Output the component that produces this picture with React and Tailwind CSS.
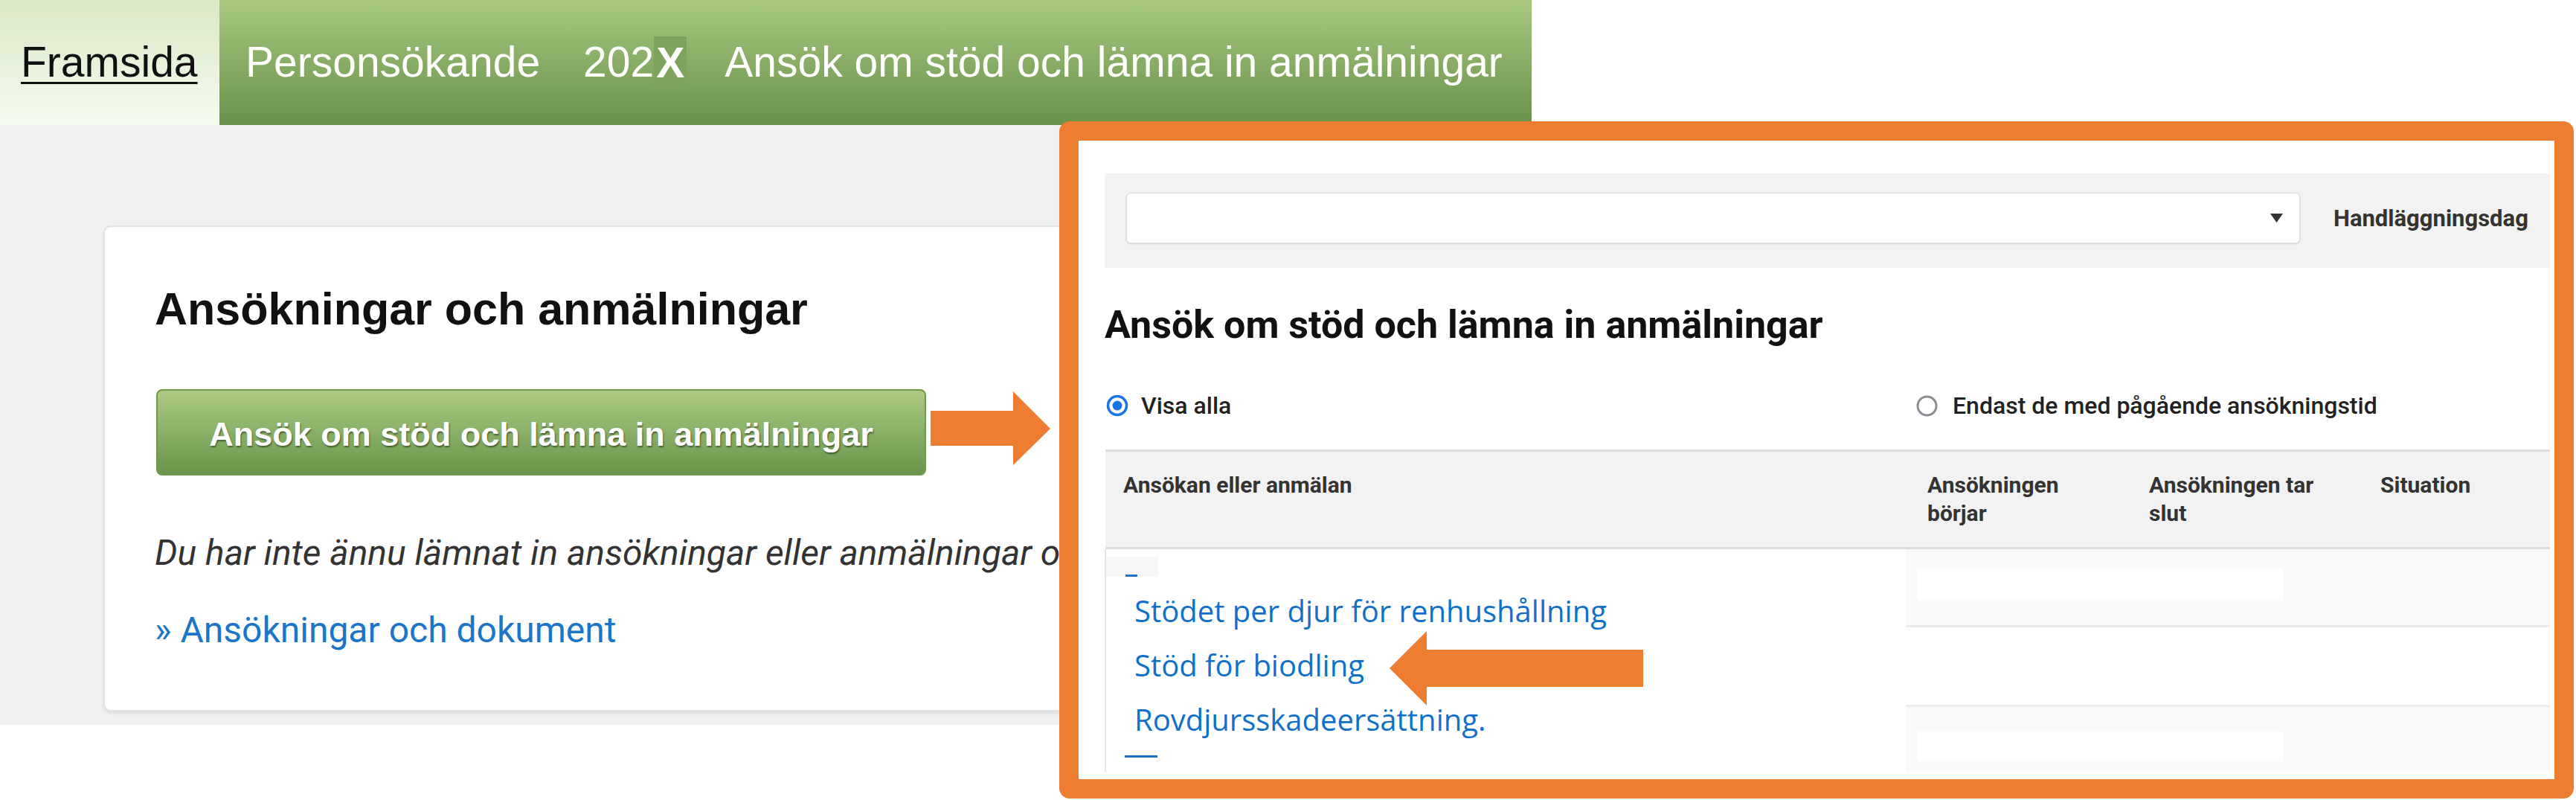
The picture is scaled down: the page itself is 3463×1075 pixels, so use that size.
import React from "react";

function RightArrow() {
  return (
    <svg className="absolute left-[1251px] top-[526px]" width="161" height="99" viewBox="0 0 161 99">
      <polygon points="0,26 111,26 111,0 161,50 111,99 111,73 0,73" fill="#ED7D31" />
    </svg>
  );
}

function LeftArrow() {
  return (
    <svg className="absolute left-[1868px] top-[848px]" width="341" height="100" viewBox="0 0 341 100">
      <polygon points="0,50 50,0 50,25 341,25 341,75 50,75 50,100" fill="#ED7D31" />
    </svg>
  );
}

function Radio({ checked }) {
  if (checked) {
    return (
      <svg width="30" height="30" viewBox="0 0 30 30" className="shrink-0">
        <circle cx="15" cy="15" r="12.5" fill="white" stroke="#1a73e8" strokeWidth="3.5" />
        <circle cx="15" cy="15" r="6.5" fill="#1a73e8" />
      </svg>
    );
  }
  return (
    <svg width="31" height="31" viewBox="0 0 31 31" className="shrink-0">
      <circle cx="15.5" cy="15.5" r="12.5" fill="white" stroke="#8c8c94" strokeWidth="3" />
    </svg>
  );
}

function InnerPage() {
  return (
    <div className="absolute left-[1424px] top-[163px] h-[910px] w-[2036px] overflow-hidden rounded-[14px] border-[26px] border-[#ED7D31] bg-white pl-[35px] pr-[6px] pt-[44px] font-['Roboto','Liberation_Sans',sans-serif]">
      {/* filter panel */}
      <div className="h-[127px] bg-[#f2f2f2] pl-[29px] pt-[26px]">
        <div className="flex h-[68px] items-center">
          <div className="flex h-[68px] w-[1578px] items-center justify-end rounded-[6px] border border-[#dadada] bg-white pr-[22px] shadow-[0_1px_3px_rgba(0,0,0,0.12)]">
            <svg width="17" height="12" viewBox="0 0 17 12">
              <polygon points="0,0 17,0 8.5,12" fill="#333" />
            </svg>
          </div>
          <span className="ml-[45px] whitespace-nowrap text-[31px] font-bold leading-none text-[#333]">Handläggningsdag</span>
        </div>
      </div>

      <h2 className="mt-[51px] whitespace-nowrap text-[52px] font-bold leading-none text-[#111]">
        Ansök om stöd och lämna in anmälningar
      </h2>

      <div className="mt-[66px] flex h-[32px] items-center">
        <div className="flex w-[1090px] items-center gap-[17px] pl-[2px]">
          <Radio checked />
          <span className="text-[32px] font-medium leading-none text-[#222]">Visa alla</span>
        </div>
        <div className="flex items-center gap-[19px]">
          <Radio />
          <span className="whitespace-nowrap text-[32px] font-medium leading-none text-[#222]">
            Endast de med pågående ansökningstid
          </span>
        </div>
      </div>

      {/* table header */}
      <div className="ml-[1px] mt-[43px] flex h-[134px] border-y-[3px] border-[#dcdcdc] bg-[#f2f2f2] text-[30px] font-bold leading-[38px] text-[#333]">
        <div className="w-[1081px] pl-[24px] pt-[26px]">Ansökan eller anmälan</div>
        <div className="w-[298px] pl-[24px] pt-[26px]">Ansökningen<br />börjar</div>
        <div className="w-[311px] pl-[24px] pt-[26px]">Ansökningen tar<br />slut</div>
        <div className="flex-1 pl-[24px] pt-[26px]">Situation</div>
      </div>

      {/* table body */}
      <div className="flex">
        <div className="w-[1077px] border-l-2 border-[#e6e6e6] pt-[10px]">
          <div className="flex h-[27px] w-[70px] items-end bg-[#f6f6f6] pl-[26px]">
            <div className="h-[3px] w-[16px] bg-[#1a73c8]" />
          </div>
          <div className="pl-[38px] pt-[9px] font-['Open_Sans','Noto_Sans',sans-serif] text-[40px] leading-[73px] text-[#1170c9]">
            <div>Stödet per djur för renhushållning</div>
            <div>Stöd för biodling</div>
            <div>Rovdjursskadeersättning.</div>
          </div>
          <div className="ml-[25px] mt-[12px] h-[3px] w-[44px] bg-[#1a73c8]" />
        </div>
        <div className="flex-1">
          <div className="h-[105px] border-b-[3px] border-[#ececec] bg-[#f9f9f9] pl-[15px] pt-[27px]">
            <div className="h-[42px] w-[492px] bg-white" />
          </div>
          <div className="h-[107px] border-b-[3px] border-[#ececec] bg-white" />
          <div className="h-[87px] bg-[#f9f9f9] pl-[15px] pt-[33px]">
            <div className="h-[40px] w-[492px] bg-white" />
          </div>
        </div>
      </div>
    </div>
  );
}

export default function App() {
  return (
    <div className="relative h-[1075px] w-[3463px] overflow-hidden bg-white font-['Liberation_Sans',Arial,sans-serif]">
      <div className="w-[2059px]">
        <nav className="flex h-[168px] text-[57px]">
          <div className="flex h-full w-[295px] items-center bg-linear-to-b from-[#dbe8c6] to-[#f3fbef] pl-[28px]">
            <span className="text-[#111] underline decoration-[3px] underline-offset-[7px]">Framsida</span>
          </div>
          <div className="flex h-full flex-1 items-center whitespace-nowrap bg-linear-to-b from-[#a9c981] to-[#68914a] text-white">
            <span className="ml-[35px]">Personsökande</span>
            <span className="ml-[58px] flex items-center">
              202
              <span className="inline-block h-[71px] bg-[#7ea35c] px-[3px] font-bold leading-[71px]">X</span>
            </span>
            <span className="ml-[51px]">Ansök om stöd och lämna in anmälningar</span>
          </div>
        </nav>

        <div className="h-[806px] bg-[#f1f1f1] pl-[139px] pt-[135px]">
          <div className="h-[653px] w-[1900px] overflow-hidden rounded-[10px] border-2 border-[#e3e3e3] bg-white pl-[67px] pt-[80px] shadow-[0_3px_4px_rgba(0,0,0,0.08)]">
            <h1 className="whitespace-nowrap text-[61px] font-bold leading-none text-[#111]">
              Ansökningar och anmälningar
            </h1>
            <div className="ml-[2px] mt-[77px] flex h-[116px] w-[1035px] items-center justify-center rounded-[8px] border-2 border-[#6d9a4b] bg-linear-to-b from-[#abca82] to-[#69954a] pt-[6px] text-[45px] font-bold text-white [text-shadow:1px_2px_2px_rgba(0,0,0,0.45)]">
              Ansök om stöd och lämna in anmälningar
            </div>
            <p className="mt-[80px] whitespace-nowrap font-['Roboto',sans-serif] text-[48px] italic leading-none text-[#333]">
              Du har inte ännu lämnat in ansökningar eller anmälningar om stöd.
            </p>
            <a className="mt-[56px] block font-['Roboto',sans-serif] text-[48px] leading-none text-[#1b75c9]">
              » Ansökningar och dokument
            </a>
          </div>
        </div>
      </div>

      <RightArrow />
      <InnerPage />
      <LeftArrow />
    </div>
  );
}
